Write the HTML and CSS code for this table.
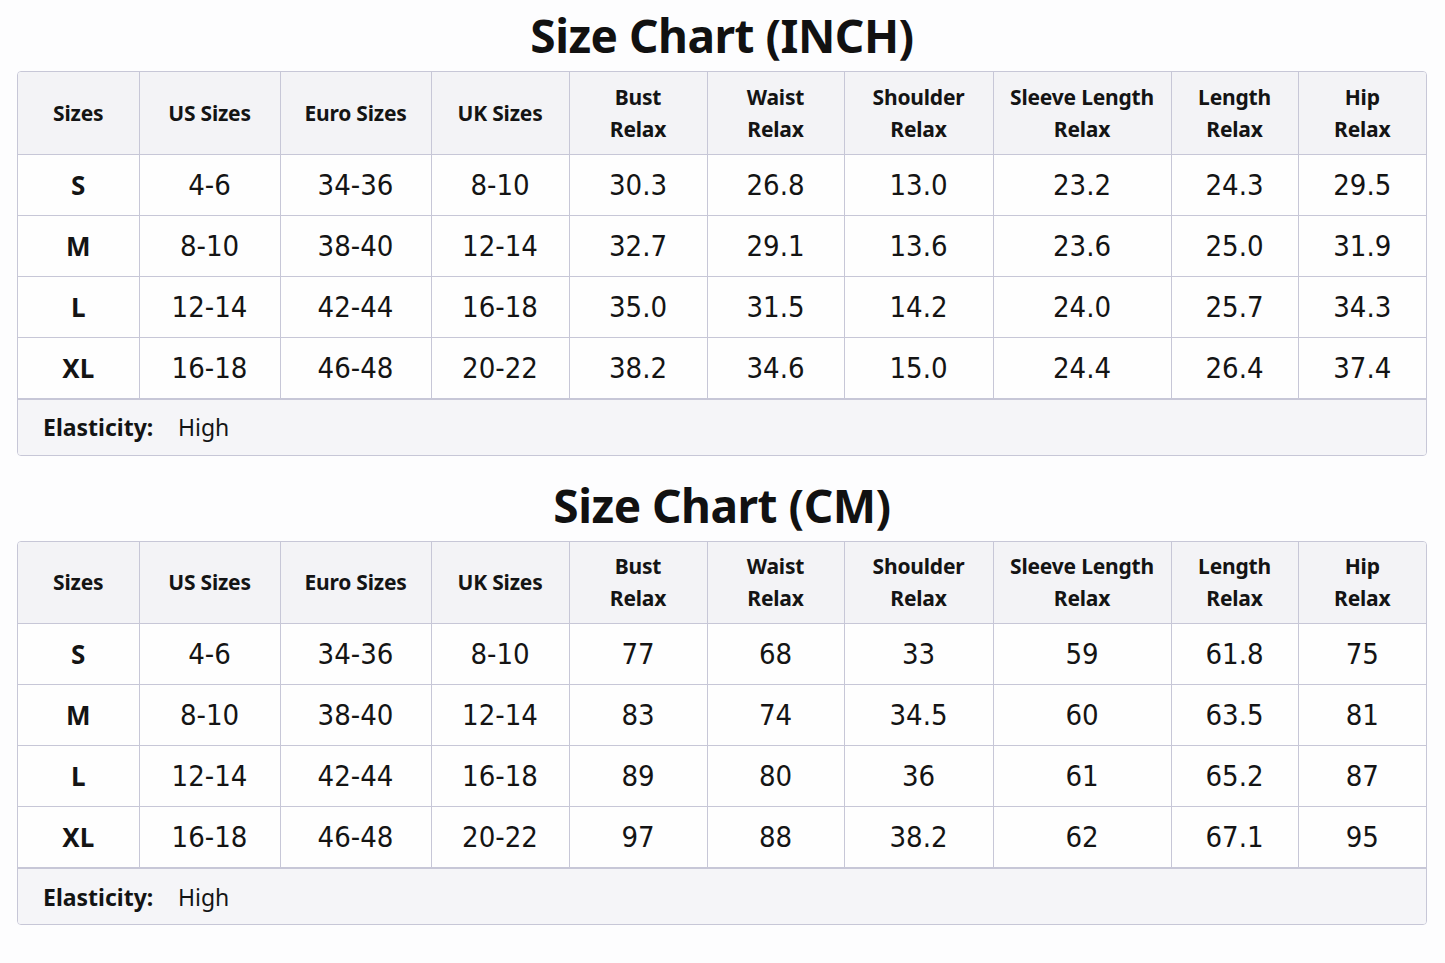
FILE: index.html
```html
<!DOCTYPE html>
<html lang="en">
<head>
<meta charset="utf-8">
<title>Size Chart</title>
<link rel="stylesheet" href="styles.css">
</head>
<body>
<main class="page">
  <section class="chart">
    <h1 class="chart-title">Size Chart (INCH)</h1>
    <div class="card">
      <table class="grid">
        <colgroup>
          <col class="c1"><col class="c2"><col class="c3"><col class="c4"><col class="c5">
          <col class="c6"><col class="c7"><col class="c8"><col class="c9"><col class="c10">
        </colgroup>
        <thead>
          <tr>
            <th>Sizes</th><th>US Sizes</th><th>Euro Sizes</th><th>UK Sizes</th>
            <th>Bust<br>Relax</th><th>Waist<br>Relax</th><th>Shoulder<br>Relax</th>
            <th>Sleeve Length<br>Relax</th><th>Length<br>Relax</th><th>Hip<br>Relax</th>
          </tr>
        </thead>
        <tbody>
          <tr><td class="size">S</td><td>4-6</td><td>34-36</td><td>8-10</td><td>30.3</td><td>26.8</td><td>13.0</td><td>23.2</td><td>24.3</td><td>29.5</td></tr>
          <tr><td class="size">M</td><td>8-10</td><td>38-40</td><td>12-14</td><td>32.7</td><td>29.1</td><td>13.6</td><td>23.6</td><td>25.0</td><td>31.9</td></tr>
          <tr><td class="size">L</td><td>12-14</td><td>42-44</td><td>16-18</td><td>35.0</td><td>31.5</td><td>14.2</td><td>24.0</td><td>25.7</td><td>34.3</td></tr>
          <tr><td class="size">XL</td><td>16-18</td><td>46-48</td><td>20-22</td><td>38.2</td><td>34.6</td><td>15.0</td><td>24.4</td><td>26.4</td><td>37.4</td></tr>
        </tbody>
      </table>
      <div class="elastic"><span class="elastic-label">Elasticity:</span><span class="elastic-value">High</span></div>
    </div>
  </section>

  <section class="chart">
    <h1 class="chart-title">Size Chart (CM)</h1>
    <div class="card">
      <table class="grid">
        <colgroup>
          <col class="c1"><col class="c2"><col class="c3"><col class="c4"><col class="c5">
          <col class="c6"><col class="c7"><col class="c8"><col class="c9"><col class="c10">
        </colgroup>
        <thead>
          <tr>
            <th>Sizes</th><th>US Sizes</th><th>Euro Sizes</th><th>UK Sizes</th>
            <th>Bust<br>Relax</th><th>Waist<br>Relax</th><th>Shoulder<br>Relax</th>
            <th>Sleeve Length<br>Relax</th><th>Length<br>Relax</th><th>Hip<br>Relax</th>
          </tr>
        </thead>
        <tbody>
          <tr><td class="size">S</td><td>4-6</td><td>34-36</td><td>8-10</td><td>77</td><td>68</td><td>33</td><td>59</td><td>61.8</td><td>75</td></tr>
          <tr><td class="size">M</td><td>8-10</td><td>38-40</td><td>12-14</td><td>83</td><td>74</td><td>34.5</td><td>60</td><td>63.5</td><td>81</td></tr>
          <tr><td class="size">L</td><td>12-14</td><td>42-44</td><td>16-18</td><td>89</td><td>80</td><td>36</td><td>61</td><td>65.2</td><td>87</td></tr>
          <tr><td class="size">XL</td><td>16-18</td><td>46-48</td><td>20-22</td><td>97</td><td>88</td><td>38.2</td><td>62</td><td>67.1</td><td>95</td></tr>
        </tbody>
      </table>
      <div class="elastic"><span class="elastic-label">Elasticity:</span><span class="elastic-value">High</span></div>
    </div>
  </section>
</main>
</body>
</html>
```

FILE: styles.css
```css
* { box-sizing: border-box; }

html, body {
  margin: 0;
  padding: 0;
  background: #fdfdfe;
  color: #141414;
  font-family: "Noto Sans", "DejaVu Sans", sans-serif;
}

.page {
  padding: 0 18px 0 17px;
  display: flex;
  flex-direction: column;
  gap: 14px;
}

.chart-title {
  margin: 0;
  height: 71px;
  line-height: 71px;
  text-align: center;
  font-size: 46px;
  font-weight: 700;
  letter-spacing: -0.5px;
  color: #111;
}

.card {
  border: 1px solid #c7c7d7;
  border-radius: 4px;
  overflow: hidden;
  background: #fefefe;
}

.grid {
  width: 100%;
  table-layout: fixed;
  border-collapse: collapse;
}

.c1 { width: 121px; }
.c2 { width: 141px; }
.c3 { width: 151px; }
.c4 { width: 138px; }
.c5 { width: 138px; }
.c6 { width: 137px; }
.c7 { width: 149px; }
.c8 { width: 178px; }
.c9 { width: 127px; }
.c10 { width: 128px; }

.grid th,
.grid td {
  border: 1px solid #c7c7d7;
  text-align: center;
  padding: 0;
}

.grid tr > :first-child { border-left: 0; }
.grid tr > :last-child { border-right: 0; }
.grid thead th { border-top: 0; }

.grid th {
  height: 82px;
  background: #f3f3f6;
  font-size: 21px;
  font-weight: 700;
  line-height: 32px;
  letter-spacing: -0.2px;
}

.grid td {
  height: 61px;
  font-family: "DejaVu Sans Condensed", "DejaVu Sans", sans-serif;
  font-stretch: condensed;
  font-size: 29px;
  font-weight: 400;
}

.grid td.size {
  font-family: "Noto Sans", sans-serif;
  font-stretch: normal;
  font-weight: 700;
  font-size: 26px;
}

.elastic {
  height: 56px;
  background: #f5f5f8;
  border-top: 1px solid #c7c7d7;
  display: flex;
  align-items: center;
  padding-left: 25px;
  font-size: 23px;
}

.elastic-label {
  font-weight: 700;
  width: 135px;
}

.elastic-value {
  font-weight: 400;
}
```
